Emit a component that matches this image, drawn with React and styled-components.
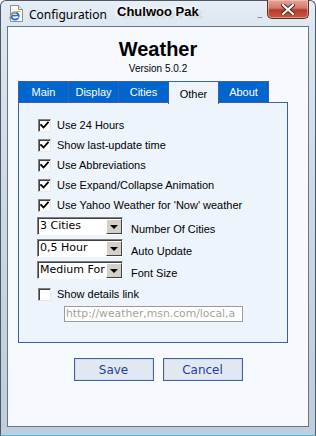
import styled, { createGlobalStyle } from 'styled-components';

const GlobalStyle = createGlobalStyle`
  html, body {
    margin: 0;
    padding: 0;
    background: #ffffff;
  }
  * {
    box-sizing: border-box;
  }
`;

const options = [
  { label: 'Use 24 Hours', checked: true },
  { label: 'Show last-update time', checked: true },
  { label: 'Use Abbreviations', checked: true },
  { label: 'Use Expand/Collapse Animation', checked: true },
  { label: "Use Yahoo Weather for 'Now' weather", checked: true },
];

const selects = [
  { value: '3 Cities', label: 'Number Of Cities' },
  { value: '0,5 Hour', label: 'Auto Update' },
  { value: 'Medium For', label: 'Font Size' },
];

const tabs = ['Main', 'Display', 'Cities', 'Other', 'About'];

function CheckMark() {
  return (
    <svg width="9" height="9" viewBox="0 0 9 9">
      <path d="M1 4 L3.5 6.5 L8 1.5" fill="none" stroke="#000" strokeWidth="1.8" strokeLinecap="square" />
    </svg>
  );
}

function IeIcon() {
  return (
    <svg width="16" height="17" viewBox="0 0 16 17">
      <path d="M2.5 0.5 H10.5 L14.5 4.5 V16.5 H2.5 Z" fill="#fbfbfb" stroke="#8a8f98" />
      <path d="M10.5 0.5 V4.5 H14.5" fill="#e6e9ee" stroke="#8a8f98" />
      <circle cx="7" cy="11" r="3.6" fill="none" stroke="#1f6fd8" strokeWidth="2" />
      <path d="M3.6 10.6 H10.6" stroke="#1f6fd8" strokeWidth="1.6" />
      <path d="M10.4 12.2 H8" stroke="#fbfbfb" strokeWidth="1.4" />
      <path d="M1 13.5 C3 9 8 5.5 12.5 6.5" fill="none" stroke="#e8a928" strokeWidth="1.2" />
    </svg>
  );
}

function CloseGlyph() {
  return (
    <svg width="14" height="11" viewBox="0 0 14 11">
      <path d="M2 1 L12 10 M12 1 L2 10" stroke="#5a1a1a" strokeWidth="4" strokeLinecap="square" />
      <path d="M2 1 L12 10 M12 1 L2 10" stroke="#ffffff" strokeWidth="2.2" strokeLinecap="square" />
    </svg>
  );
}

export default function App() {
  return (
    <>
      <GlobalStyle />
      <Window>
        <TitleBar>
          <IeIcon />
          <Title>Configuration</Title>
          <Author>Chulwoo Pak</Author>
          <Dots>...</Dots>
          <CloseButton>
            <CloseGlyph />
          </CloseButton>
        </TitleBar>
        <Client>
          <Heading>Weather</Heading>
          <Version>Version 5.0.2</Version>
          <TabArea>
            <TabStrip>
              {tabs.map((t) => (
                <Tab key={t} $active={t === 'Other'}>{t}</Tab>
              ))}
            </TabStrip>
            <Panel>
              {options.map((o) => (
                <CheckRow key={o.label}>
                  <CheckBox>{o.checked && <CheckMark />}</CheckBox>
                  <span>{o.label}</span>
                </CheckRow>
              ))}
              {selects.map((s) => (
                <SelectRow key={s.label}>
                  <Select>
                    <SelectValue>{s.value}</SelectValue>
                    <DropButton>
                      <Arrow />
                    </DropButton>
                  </Select>
                  <SelectLabel>{s.label}</SelectLabel>
                </SelectRow>
              ))}
              <CheckRow $gapTop={3}>
                <CheckBox />
                <span>Show details link</span>
              </CheckRow>
              <LinkInput>http://weather,msn.com/local,a</LinkInput>
            </Panel>
          </TabArea>
          <ButtonRow>
            <Button>Save</Button>
            <Button>Cancel</Button>
          </ButtonRow>
        </Client>
      </Window>
    </>
  );
}

const Window = styled.div`
  position: relative;
  width: 316px;
  height: 436px;
  display: flex;
  flex-direction: column;
  border: 1px solid #4d5866;
  border-bottom-color: #2fc4e8;
  border-radius: 6px 6px 0 0;
  background: linear-gradient(180deg, #e6eef6 0px, #dbe6f0 30px, #ccd9e6 200px, #bfcddc 420px);
  font-family: 'Liberation Sans', Arial, sans-serif;
`;

const TitleBar = styled.div`
  height: 25px;
  display: flex;
  align-items: center;
  padding-left: 7px;
  gap: 5px;
`;

const Title = styled.span`
  font-family: 'Noto Sans', 'Open Sans', sans-serif;
  font-size: 12px;
  color: #000;
  margin-top: 1px;
`;

const Author = styled.span`
  position: absolute;
  left: 116px;
  top: 3px;
  font-weight: bold;
  font-size: 13px;
  color: #000;
  text-shadow: 0 0 4px #fff, 0 0 6px #fff, 3px 2px 2px rgba(120, 120, 120, 0.35);
`;

const Dots = styled.span`
  position: absolute;
  left: 256px;
  top: 9px;
  font-size: 9px;
  letter-spacing: -1px;
  color: #404a6a;
`;

const CloseButton = styled.div`
  position: absolute;
  right: 6px;
  top: -1px;
  width: 42px;
  height: 19px;
  display: flex;
  align-items: center;
  justify-content: center;
  border: 1px solid #6b2a24;
  border-top: none;
  border-radius: 0 0 5px 5px;
  background: linear-gradient(180deg, #e6a69c 0%, #d1786b 45%, #b63c2c 55%, #c45a45 100%);
  box-shadow: inset 0 0 0 1px rgba(255, 210, 200, 0.5);
`;

const Client = styled.div`
  flex: 1;
  margin: 0 6px 8px 6px;
  border: 1px solid #6a7482;
  background: #f6f9fe;
  display: flex;
  flex-direction: column;
  padding-top: 10px;
`;

const Heading = styled.div`
  text-align: center;
  font-size: 20px;
  font-weight: bold;
  line-height: 24px;
  color: #000;
`;

const Version = styled.div`
  text-align: center;
  font-size: 10px;
  line-height: 13px;
  margin-top: 1px;
  color: #000;
`;

const TabArea = styled.div`
  margin: 6px 0 0 10px;
  width: 270px;
`;

const TabStrip = styled.div`
  display: flex;
  height: 22px;
`;

const Tab = styled.div`
  width: 51px;
  display: flex;
  align-items: center;
  justify-content: center;
  font-size: 11px;
  color: ${(p) => (p.$active ? '#000' : '#fff')};
  background: ${(p) => (p.$active ? '#eef4fb' : '#0065cc')};
  border: 1px solid #3e5ea8;
  border-bottom: ${(p) => (p.$active ? 'none' : '1px solid #3e5ea8')};
  margin-right: -1px;
  padding-top: ${(p) => (p.$active ? '1px' : '0')};
  position: relative;
  z-index: 1;
  height: ${(p) => (p.$active ? '23px' : '22px')};
`;

const Panel = styled.div`
  height: 241px;
  border: 1px solid #3e5ea8;
  margin-top: -1px;
  background: #eef4fb;
  padding: 12px 0 0 19px;
  font-size: 11px;
  color: #000;
`;

const CheckRow = styled.div`
  height: 20px;
  display: flex;
  align-items: center;
  gap: 6px;
  margin-top: ${(p) => p.$gapTop || 0}px;
`;

const CheckBox = styled.span`
  width: 13px;
  height: 13px;
  display: flex;
  align-items: center;
  justify-content: center;
  background: #fff;
  border: 1px solid;
  border-color: #7f7f7f #e8e8e8 #e8e8e8 #7f7f7f;
  box-shadow: inset 1px 1px 0 #404040;
`;

const SelectRow = styled.div`
  height: 22px;
  display: flex;
  align-items: center;
  gap: 8px;
  margin-left: -1px;
`;

const Select = styled.div`
  width: 86px;
  height: 18px;
  display: flex;
  align-items: stretch;
  background: #fff;
  border: 1px solid;
  border-color: #7f7f7f #ffffff #ffffff #7f7f7f;
  box-shadow: inset 1px 1px 0 #404040;
  overflow: hidden;
`;

const SelectValue = styled.span`
  flex: 1;
  white-space: nowrap;
  padding: 1px 0 0 2px;
  font-family: 'DejaVu Sans', sans-serif;
  font-size: 11px;
  line-height: 14px;
`;

const DropButton = styled.span`
  width: 16px;
  margin: 1px 0 0 0;
  display: flex;
  align-items: center;
  justify-content: center;
  background: #d4d0c8;
  border: 1px solid;
  border-color: #ffffff #404040 #404040 #ffffff;
`;

const Arrow = styled.span`
  width: 0;
  height: 0;
  border-left: 4px solid transparent;
  border-right: 4px solid transparent;
  border-top: 4px solid #000;
`;

const SelectLabel = styled.span`
  padding-top: 5px;
`;

const LinkInput = styled.div`
  width: 179px;
  height: 16px;
  margin: 2px 0 0 26px;
  padding: 0 1px;
  border: 1px solid #9a9a9a;
  background: #fff;
  color: #a2a2a2;
  font-family: 'DejaVu Sans', sans-serif;
  font-size: 10.8px;
  line-height: 14px;
  white-space: nowrap;
`;

const ButtonRow = styled.div`
  display: flex;
  justify-content: center;
  gap: 9px;
  margin-top: 15px;
`;

const Button = styled.div`
  width: 80px;
  height: 23px;
  display: flex;
  align-items: center;
  justify-content: center;
  background: #e1e8f1;
  border: 1px solid #3e5ea8;
  box-shadow: inset 0 0 0 1px #d3dce8;
  color: #1d3f9e;
  font-family: 'DejaVu Sans', sans-serif;
  font-size: 12px;
`;
